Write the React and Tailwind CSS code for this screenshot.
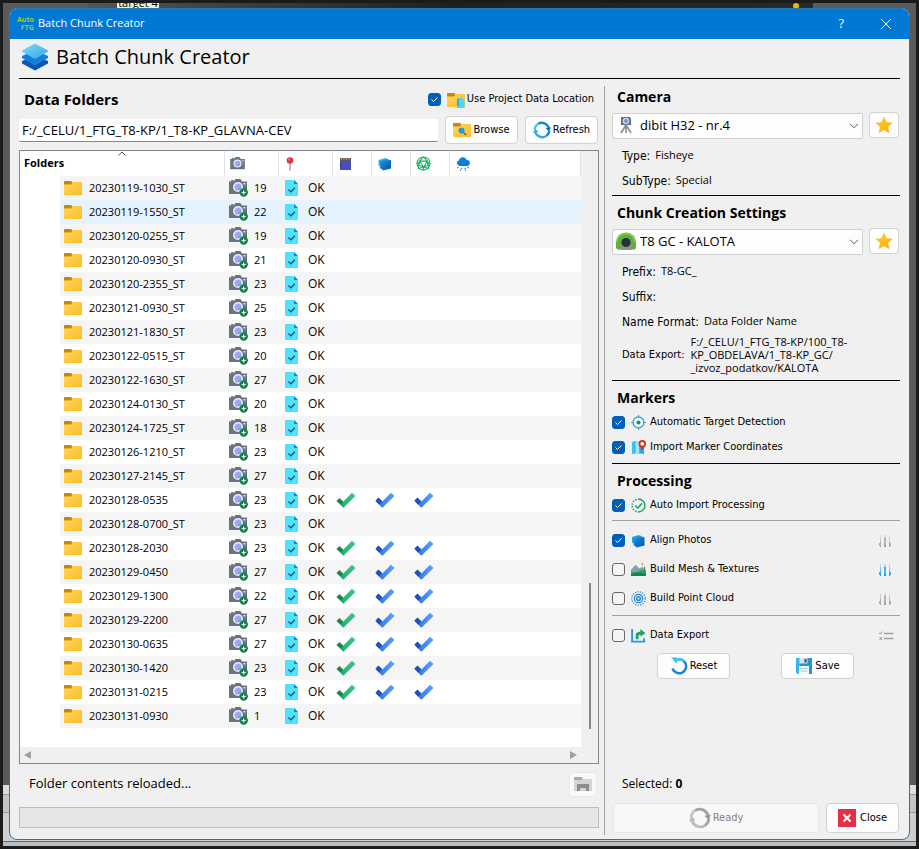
import React from "react";

const ROWS = [
  ["20230119-1030_ST", 19], ["20230119-1550_ST", 22], ["20230120-0255_ST", 19],
  ["20230120-0930_ST", 21], ["20230120-2355_ST", 23], ["20230121-0930_ST", 25],
  ["20230121-1830_ST", 23], ["20230122-0515_ST", 20], ["20230122-1630_ST", 27],
  ["20230124-0130_ST", 20], ["20230124-1725_ST", 18], ["20230126-1210_ST", 23],
  ["20230127-2145_ST", 27], ["20230128-0535", 23, true], ["20230128-0700_ST", 23],
  ["20230128-2030", 23, true], ["20230129-0450", 27, true], ["20230129-1300", 22, true],
  ["20230129-2200", 27, true], ["20230130-0635", 27, true], ["20230130-1420", 23, true],
  ["20230131-0215", 23, true], ["20230131-0930", 1],
];

const LABEL = "font-['DejaVu_Sans_Condensed','DejaVu_Sans',sans-serif]";

function Gradients() {
  return (
    <svg width="0" height="0" className="absolute" aria-hidden="true">
      <defs>
        <linearGradient id="folder" x1="0" y1="0" x2="1" y2="1"><stop offset="0" stopColor="#ffd75e" /><stop offset="1" stopColor="#fcbc24" /></linearGradient>
        <linearGradient id="lens" x1="0" y1="0" x2="1" y2="1"><stop offset="0" stopColor="#c9a6ff" /><stop offset="1" stopColor="#6fa0ee" /></linearGradient>
        <linearGradient id="layer" x1="0" y1="0" x2="1" y2="1"><stop offset="0" stopColor="#7fdcfb" /><stop offset="1" stopColor="#32a5e8" /></linearGradient>
        <linearGradient id="cube" x1="0" y1="0" x2="1" y2="1"><stop offset="0" stopColor="#1b8be0" /><stop offset="1" stopColor="#0057aa" /></linearGradient>
        <linearGradient id="green" x1="0" y1="0" x2="1" y2="0"><stop offset="0" stopColor="#21ad64" /><stop offset="1" stopColor="#44c494" /></linearGradient>
        <linearGradient id="blue" x1="0" y1="0" x2="1" y2="0"><stop offset="0" stopColor="#3079ea" /><stop offset="1" stopColor="#5ca4ff" /></linearGradient>
        <linearGradient id="star" x1="0" y1="0" x2="1" y2="1"><stop offset="0" stopColor="#ffcf33" /><stop offset="1" stopColor="#fdab05" /></linearGradient>
        <linearGradient id="fade" x1="0" y1="0" x2="0" y2="1"><stop offset="0" stopColor="#e2e2e2" /><stop offset="1" stopColor="#999" /></linearGradient>
        <linearGradient id="bluefade" x1="0" y1="0" x2="0" y2="1"><stop offset="0" stopColor="#d3e4ee" /><stop offset="1" stopColor="#199be2" /></linearGradient>
      </defs>
    </svg>
  );
}

function Icon({ w = 16, h = w, box = "0 0 16 16", children, className = "" }) {
  return <svg width={w} height={h} viewBox={box} className={`shrink-0 ${className}`} aria-hidden="true">{children}</svg>;
}

const Folder = ({ children }) => (
  <Icon w={18} h={16} box="0 0 18 16">
    <path d="M0 1.500Q0 1 .6 1H7l2 2v4H0z" fill="#c7860c" />
    <path d="M0 4.500h7L9 2h9v13H0z" fill="url(#folder)" />
    {children}
  </Icon>
);

const Camera = ({ plus }) => (
  <Icon w={plus ? 20 : 15} h={plus ? 18 : 13} box={plus ? "0 0 20 18" : "0 0 18 16"}>
    <rect x="2" y="1" width="3" height="2" fill="#5795b4" />
    <path d="M0 2.500h5L6.500 0h5L13 2.500h5V15H0z" fill="#69747d" />
    <rect x="14.500" y="4" width="2" height="1.500" fill="#d9e2e8" />
    <circle cx="9" cy="8" r="5" fill="#e9eafb" />
    <circle cx="9" cy="8" r="3.500" fill="url(#lens)" />
    {plus && <><circle cx="14.700" cy="13.500" r="4.200" fill="#128048" /><path d="M14.700 11.500v4M12.700 13.500h4" stroke="#fff" strokeWidth="1.200" /></>}
  </Icon>
);

const Doc = () => (
  <Icon w={13} h={16} box="0 0 13 16">
    <path d="M0 0h9l4 4v12H0z" fill="#50e1ff" />
    <path d="M9 0l4 4H9z" fill="#1f7fd0" />
    <path d="M3.500 9.500l2.300 2.300L10 7.700" fill="none" stroke="#0a5566" strokeWidth="1.200" />
  </Icon>
);

const Tick = ({ blue }) => (
  <Icon w={20} h={16} box="0 0 20 16">
    <path d="M.5 9L3.500 6 10 12.300 7.300 15.500z" fill={blue ? "#1c55b4" : "#16884c"} />
    <path d="M4.500 12.500L16 .8 19.500 4 7.600 15.600z" fill={blue ? "url(#blue)" : "url(#green)"} />
    {blue && <path d="M.5 8.500L3.500 5.500 7 9l-3 3.500z" fill="#1c55b4" />}
  </Icon>
);

const Photos = ({ single }) => (
  <Icon w={single ? 15 : 14} h={14} box="0 0 14 14">
    <path d="M.5 3L7 1l3 1v7H.5z" fill={single ? "#2aa5ec" : "#35c1f1"} />
    <path d="M1.500 4l7-2 3.500 1v8l-10 .5z" fill="#1b93df" />
    <path d="M3 5.500l10-2.500v8.500l-8 2-2-2z" fill="url(#cube)" />
  </Icon>
);

const Pin = () => (
  <Icon w={8} h={14} box="0 0 8 14">
    <path d="M3.300 6h1.400v7.500L4 14l-.7-.5z" fill="#9a9da1" /><circle cx="4" cy="3.500" r="3.300" fill="#e2334c" /><circle cx="3" cy="2.500" r="1" fill="#f1778a" />
  </Icon>
);

const Card = () => (
  <Icon w={12} h={14} box="0 0 12 14">
    <path d="M0 1h11v12H0z" fill="#494fb8" /><path d="M0 1h11v3H0z" fill="#60576d" /><path d="M1.500 1v2M4 1v2M6.500 1v2M9 1v2" stroke="#c39a52" /><path d="M0 6h1v4H0z" fill="#333a93" />
  </Icon>
);

const Mesh = () => (
  <Icon w={15} box="0 0 16 16">
    <g fill="none" stroke="#27ae68" strokeWidth="1.200"><circle cx="8" cy="8" r="7" /><path d="M8 1L4 5.500 1.500 9M8 1l4 4.500L14.500 9M4 5.500h8L8 12zM1.500 9L8 12l6.500-3M4 5.500L2.500 13 8 12l5.500 1L12 5.500M8 12v3" /></g>
  </Icon>
);

const Cloud = () => (
  <Icon w={14} h={14} box="0 0 14 14">
    <path d="M3.500 9A3 3 0 0 1 3 3.200 4 4 0 0 1 10.700 3 3 3 0 0 1 11 9z" fill="#127fd5" />
    <g fill="#2a8de0"><circle cx="2" cy="10.500" r=".8" /><circle cx="5.500" cy="11.500" r=".8" /><circle cx="9" cy="11.500" r=".8" /><circle cx="12" cy="10.500" r=".8" /><circle cx="4.500" cy="13.200" r=".7" /><circle cx="9.500" cy="13.200" r=".7" /></g>
  </Icon>
);

const Layers = () => (
  <Icon w={28} box="0 0 28 28">
    <path d="M1 18l13-5 13 5v2.500L14 27.500l-13-7z" fill="#0a58aa" />
    <path d="M1 13l13-6 13 6v2L14 22.500 1 15z" fill="#1480de" />
    <path d="M1 7.500L14 .5l13 7v1L14 16 1 8.500z" fill="url(#layer)" />
  </Icon>
);

const Cycle = ({ w = 18, gray }) => (
  <Icon w={w} box="0 0 20 20">
    <g fill="none" stroke={gray ? "#a3a3a3" : "#1688d3"} strokeWidth="2.600">
      <path d="M2.500 12A8 8 0 0 0 14.500 16.800" stroke={gray ? "#bcbcbc" : "#35a9e6"} />
      <path d="M17.500 8A8 8 0 0 0 5.500 3.200" />
      <path d="M14.500 16.800A8 8 0 0 0 18 10.500" />
      <path d="M5.500 3.200A8 8 0 0 0 2 9.500" stroke={gray ? "#c8c8c8" : "#45c5f2"} />
    </g>
    <path d="M0 13L2.300 8.500 6 12z" fill={gray ? "#bbb" : "#2fa8e8"} />
    <path d="M20 7L17.700 11.500 14 8z" fill={gray ? "#999" : "#0f6cbd"} />
  </Icon>
);

const ResetIcon = () => (
  <Icon w={18} box="0 0 18 18">
    <path d="M4.500 4A7 7 0 1 1 2.500 11.500" fill="none" stroke="#1688d3" strokeWidth="2.500" />
    <path d="M4.500 4A7 7 0 0 1 14 4.200" fill="none" stroke="#43c7f5" strokeWidth="2.500" />
    <path d="M1 .5h6v6z" fill="#35c1f1" />
  </Icon>
);

const Floppy = () => (
  <Icon w={18} box="0 0 18 18">
    <path d="M1 1h16v16H3l-2-2z" fill="#199bd5" /><path d="M1 1h4v16H3l-2-2z" fill="#35b8e8" />
    <rect x="4.500" y="1" width="8" height="5.500" fill="#d7e1e8" /><rect x="9.500" y="2" width="2" height="3.500" fill="#3b4a55" />
    <rect x="4" y="9" width="10" height="8" fill="#f5f9fc" /><path d="M5.500 11.500h7M5.500 14h7" stroke="#a4c6da" />
  </Icon>
);

const Star = () => <Icon w={18} box="0 0 18 18"><path d="M9 .5l2.600 5.700 6 .6-4.500 4.100 1.300 6.300L9 14l-5.400 3.200 1.300-6.300L.4 6.800l6-.6z" fill="url(#star)" /></Icon>;

const Scanner = () => (
  <Icon w={14} h={18} box="0 0 14 18">
    <path d="M7 9L2 17M7 9l5 8M7 9v8" stroke="#858b91" strokeWidth="1.600" />
    <path d="M2 1h9l1 2v6H2z" fill="#596d83" /><circle cx="7" cy="5" r="3.300" fill="#cbd9ef" /><circle cx="7" cy="5" r="2" fill="#7b93cf" />
  </Icon>
);

const Tunnel = () => (
  <Icon w={20} h={18} box="0 0 20 18">
    <path d="M0 16V10a10 9.500 0 0 1 20 0v6l-1.500 1.500H1.500z" fill="#5fae35" />
    <path d="M1 10a9 8.500 0 0 1 18 0" fill="none" stroke="#86d154" strokeWidth="1.500" />
    <path d="M4.500 18v-7a5.500 5.500 0 0 1 11 0V18z" fill="#8b9296" />
    <circle cx="10" cy="10.500" r="4.600" fill="#263238" />
  </Icon>
);

const Target = () => <Icon w={15}><circle cx="8" cy="8" r="5.800" fill="#fafdff" stroke="#3aa6e0" strokeWidth="1.500" /><path d="M8 0v3M8 13v3M0 8h3M13 8h3" stroke="#3aa6e0" strokeWidth="1.200" /><circle cx="8" cy="8" r="2.200" fill="#1c9152" /></Icon>;
const MapPin = () => <Icon w={15}><path d="M1 2l4-1 5 2v12l-4-1-5 1z" fill="#35c1f1" /><path d="M5 1l4 2v12l-4-1z" fill="#a3e4f8" /><path d="M9 7h5v8l-5-1z" fill="#2ea6e6" /><path d="M12 11L8.500 5.500h7z" fill="#c4391c" /><circle cx="12" cy="4" r="3" fill="#fff" stroke="#c4391c" strokeWidth="2" /></Icon>;
const AutoTick = () => <Icon w={15}><circle cx="8" cy="8" r="6.800" fill="none" stroke="#2aab68" strokeWidth="1.700" strokeDasharray="21.500 1.500 1.500 1.500 1.500 1.500 1.500 1.500 1.500 1.500 1.500 1.500 1.500 1.500" transform="rotate(-90 8 8)" /><path d="M4.500 8l2.800 2.800 4.500-5" fill="none" stroke="#2aab68" strokeWidth="1.800" /></Icon>;
const Terrain = () => <Icon w={15}><path d="M0 8l5-5 4 4 3-2 4 4v4H0z" fill="#89a2ad" /><path d="M0 11l8-1 3-2 5 1v6H0z" fill="#2fa565" /><path d="M0 13q5-3 16-1v3H0z" fill="#138552" /><circle cx="12" cy="2" r="1.200" fill="#fba52a" /><path d="M14.500 5v5" stroke="#118a4e" /></Icon>;
const Points = () => <Icon w={15}><g fill="none" stroke="#2387d8"><circle cx="8" cy="8" r="2" strokeWidth="1.600" /><circle cx="8" cy="8" r="4.500" strokeWidth="1.300" /><circle cx="8" cy="8" r="7.200" strokeWidth="1.200" strokeDasharray="1.400 1.300" /></g></Icon>;
const Export = () => <Icon w={15}><path d="M1.200 1v13.500H14V11" fill="none" stroke="#2397e0" strokeWidth="2" /><path d="M5 12V8q0-4 5-4V1l5.500 4.500L10 9V6.800q-2 0-2 2V12z" fill="#1fa167" /></Icon>;

const Sliders = ({ active }) => (
  <Icon w={14} h={14} box="0 0 14 14">
    <g fill={active ? "url(#bluefade)" : "url(#fade)"}><rect x="2" y="1" width="1" height="12" /><rect x="6" y="1" width="2" height="12" /><rect x="11" y="1" width="1" height="12" /></g>
    <g fill={active ? "#37aee6" : "#b0b0b0"}><rect x="1" y="9" width="2" height="3" /><rect x="6" y="4" width="2" height="3" /><rect x="11" y="9" width="2" height="3" /></g>
  </Icon>
);
const ListIcon = () => <Icon w={15} h={10} box="0 0 15 10"><path d="M5 2.500h9.500M5 7.500h9.500" stroke="#a0a0a0" strokeWidth="1.400" /><path d="M0 2l1.300 1L3.500.5M.5 6l2.500 3M3 6L.5 9" stroke="#999" fill="none" /></Icon>;

const BTN = "flex items-center justify-center rounded border border-[#d2d2d2] bg-[#fdfdfd] text-black";

function Check({ id, label, icon, on, children }) {
  return (
    <div className="flex h-[17px] items-center">
      <span className="grid shrink-0">
        <input id={id} type="checkbox" defaultChecked={on} className="peer col-start-1 row-start-1 size-[13px] appearance-none rounded-[3px] border border-[#666] bg-[#f5f5f5] checked:border-[#005fb8] checked:bg-[#005fb8]" />
        <svg viewBox="0 0 13 13" className="pointer-events-none invisible col-start-1 row-start-1 size-[13px] peer-checked:visible" aria-hidden="true"><path d="M3.500 6.500l2 2 4-4" fill="none" stroke="#fff" /></svg>
      </span>
      <label htmlFor={id} className={`flex items-center text-[11px] whitespace-nowrap ${LABEL}`}>{icon}{label}</label>
      {children}
    </div>
  );
}

function Picker({ labelledBy, value, icon }) {
  return (
    <div className="flex gap-1.5 pr-px">
      <div className="relative h-[26px] grow">
        <select aria-labelledby={labelledBy} className="h-full w-full appearance-none rounded-xs border border-[#cfcfcf] bg-[#fdfdfd] pl-[27px] text-[13px] text-black">
          <option>{value}</option>
        </select>
        <span className="pointer-events-none absolute inset-y-0 left-1 flex w-5 items-center justify-center">{icon}</span>
        <svg viewBox="0 0 10 6" className="pointer-events-none absolute top-[11px] right-1 h-[6px] w-[10px]" aria-hidden="true"><path d="M1 .8l4 4 4-4" fill="none" stroke="#555" /></svg>
      </div>
      <button type="button" aria-label="Favourite" className={`${BTN} h-[26px] w-[30px]`}><Star /></button>
    </div>
  );
}

const Heading = ({ id, children }) => <h2 id={id} className="pl-[5px] text-[14px]/[20px] font-bold">{children}</h2>;
const Field = ({ name, children }) => <div className="flex h-[25px] items-center gap-[5px] pl-2.5 text-[11px]"><dt className={`text-[12px] ${LABEL}`}>{name}:</dt><dd>{children}</dd></div>;

function Folders() {
  const th = "border-r border-[#e2e2e2] p-0 align-middle";
  return (
    <div className="flex min-h-0 grow flex-col border border-[#828790] bg-[#f0f0f0]">
      <div className="flex grow">
        <div className="relative min-w-0 grow bg-white">
          <svg viewBox="0 0 8 5" className="absolute top-0 left-[98px] h-[5px] w-2" aria-hidden="true"><path d="M.5 4.500L4 1l3.500 3.500" fill="none" stroke="#555" /></svg>
          <table className="w-full table-fixed border-separate border-spacing-0 text-[11px]">
            <colgroup><col className="w-[205px]" /><col className="w-[54px]" /><col className="w-[54px]" /><col className="w-[39px]" /><col className="w-[39px]" /><col className="w-[39px]" /><col /></colgroup>
            <thead>
              <tr className="h-[25px]">
                <th className={`${th} pl-1 text-left font-bold`}>Folders</th>
                <th aria-label="Photos" className={`${th} pl-[5px]`}><Camera /></th>
                <th aria-label="Markers" className={`${th} pl-[7px]`}><Pin /></th>
                <th aria-label="Card" className={`${th} pl-[7px]`}><Card /></th>
                <th aria-label="Aligned" className={`${th} pl-1.5`}><Photos /></th>
                <th aria-label="Mesh" className={`${th} pl-[5px]`}><Mesh /></th>
                <th aria-label="Cloud" className={`${th} pl-1.5`}><Cloud /></th>
              </tr>
            </thead>
            <tbody>
              {ROWS.map(([name, count, done], i) => {
                const bg = i === 1 ? "bg-[#e5f3ff]" : i % 2 === 0 ? "bg-[#f5f5f5]" : "bg-white";
                return (
                  <tr key={name} className="h-6">
                    <td className="p-0"><div className={`ml-10 flex h-6 items-center gap-[7px] pl-1 ${bg}`}><Folder />{name}</div></td>
                    <td className={`p-0 ${bg}`}><div className="flex items-center gap-[5px] pl-1"><Camera plus />{count}</div></td>
                    <td className={`p-0 ${bg}`}><div className="flex items-center gap-[10px] pl-1.5 text-[12px]"><Doc />OK</div></td>
                    <td className={`p-0 pl-[3px] ${bg}`}>{done && <Tick />}</td>
                    <td className={`p-0 pl-[3px] ${bg}`}>{done && <Tick blue />}</td>
                    <td className={`p-0 pl-[3px] ${bg}`}>{done && <Tick blue />}</td>
                    <td className={`p-0 ${bg}`} />
                  </tr>
                );
              })}
            </tbody>
          </table>
        </div>
        <div className="flex w-[17px] shrink-0 flex-col items-center justify-end pb-[18px]"><div className="h-[146px] w-0.5 bg-[#868686]" /></div>
      </div>
      <div className="flex h-4 items-center justify-between pr-[21px] pl-1">
        <Icon w={7} h={8} box="0 0 7 8"><path d="M7 0v8L0 4z" fill="#a0a0a0" /></Icon>
        <Icon w={7} h={8} box="0 0 7 8"><path d="M0 0v8l7-4z" fill="#a0a0a0" /></Icon>
      </div>
    </div>
  );
}

function Backdrop() {
  return (
    <div className="absolute inset-[3px] flex flex-col overflow-hidden bg-[#5b5b5b]" aria-hidden="true">
      <div className="flex h-1.5 shrink-0 justify-between overflow-hidden">
        <div className="w-[85px]" />
        <div className="flex grow items-end justify-between bg-gradient-to-r from-[#555] via-[#202020] to-[#292929] pl-[29px]">
          <span className="flex h-1.5 w-[42px] items-end justify-center overflow-hidden bg-[#f3f0cf] text-[11px]/[12px] text-black">target 4</span>
          <span className="mr-3.5 size-1.5 rounded-full bg-[#e8b90c]" />
        </div>
        <div className="w-[103px]" />
      </div>
      <div className="grow" />
      <div className="h-2.5 border-b border-[#999] bg-[#dedede]" />
      <div className="h-[18px] border-b border-[#999] bg-[#c4c4c4]" />
      <div className="h-[29px] border-b border-[#666] bg-[#cfcfcf]" />
      <div className="h-1 bg-[#bdbdbd]" />
    </div>
  );
}

export default function App() {
  return (
    <div className="relative flex min-h-screen flex-col bg-[#1b1b1b] px-[9px] pt-2 pb-[9px] font-['Open_Sans','Noto_Sans',sans-serif] text-black">
      <Gradients />
      <Backdrop />
      <main className="relative flex grow flex-col overflow-hidden rounded-lg border border-[#2477b3] bg-[#f0f0f0]">
        <header className="-mx-px -mt-px flex h-[31px] items-center bg-[#0078d4] pr-[18px] pl-2 text-white">
          <span className="grid w-4 text-[7px]/[8px] font-bold text-[#9fcf2a]" aria-hidden="true"><span>Auto</span><span className="text-right text-[#7cc95a]">FTG</span></span>
          <span className="grow pl-[5px] text-[11px]">Batch Chunk Creator</span>
          <button type="button" aria-label="Help" className="mr-9 text-[13px]">?</button>
          <button type="button" aria-label="Close window"><Icon w={12} box="0 0 12 12"><path d="M1 1l10 10M11 1L1 11" stroke="#fff" /></Icon></button>
        </header>
        <div className="flex grow flex-col px-[9px]">
          <div className="flex h-10 items-center gap-[7px] border-b border-black pb-1 pl-0.5"><Layers /><h1 className="text-[20px]">Batch Chunk Creator</h1></div>
          <div className="flex grow gap-[5px] pt-[7px]">
            <section className="flex grow flex-col pb-[11px]">
              <div className="flex h-[27px] items-center justify-between pr-[5px] pl-[5px]">
                <h2 id="data-folders" className="text-[15px] font-bold">Data Folders</h2>
                <Check id="project" on label="Use Project Data Location" icon={<span className="mr-0.5 ml-1.5"><Folder><path d="M10 6h5l2.500 2.500V16H10z" fill="#4ed6f7" /><path d="M11 7v7" stroke="#1d87bf" /></Folder></span>} />
              </div>
              <div className="mt-[3px] mb-1.5 flex items-center gap-[7px] pr-px">
                <input aria-labelledby="data-folders" defaultValue="F:/_CELU/1_FTG_T8-KP/1_T8-KP_GLAVNA-CEV" className="h-[23px] min-w-0 grow rounded-xs border-b border-[#868686] bg-white px-[3px] text-[13px]" />
                <button type="button" className={`${BTN} h-7 w-[73px] gap-0.5 text-[11px] ${LABEL}`}><Folder><circle cx="8.500" cy="8.500" r="3" fill="#2b95dc" /><path d="M10.500 10.500l2.500 2.500" stroke="#1673bd" strokeWidth="1.500" /></Folder>Browse</button>
                <button type="button" className={`${BTN} h-7 w-[73px] gap-0.5 text-[11px] ${LABEL}`}><Cycle />Refresh</button>
              </div>
              <Folders />
              <div className="flex h-10 items-center justify-between pr-0.5 pl-2.5 text-[13px]">
                <p>Folder contents reloaded...</p>
                <button type="button" disabled aria-label="Open export folder" className="flex h-[25px] w-7 items-center justify-center rounded border border-[#e8e8e8] bg-[#f9f9f9]"><Icon w={18} h={16} box="0 0 18 16"><path d="M0 1h8l1 2v2H0z" fill="#aaa" /><path d="M0 4h7l2-1h9v12H0z" fill="#d4d4d4" /><path d="M3 8h12v7h-3v-3H6v3H3z" fill="#8e8e8e" /></Icon></button>
              </div>
              <div role="progressbar" aria-valuenow={0} aria-label="Progress" className="mt-[3px] h-[21px] border border-[#bcbcbc] bg-[#e6e6e6]" />
            </section>
            <section className="mb-1 flex w-[296px] shrink-0 flex-col border-l border-[#a0a0a0] pl-[7px]">
              <div className="border-b border-black pt-px pb-[2px]">
                <div className="pb-[5px]"><Heading id="camera">Camera</Heading></div>
                <Picker labelledBy="camera" value="dibit H32 - nr.4" icon={<Scanner />} />
                <dl className="pt-[5px]"><Field name="Type">Fisheye</Field><Field name="SubType">Special</Field></dl>
              </div>
              <div className="border-b border-black pt-[7px] pb-[5px]">
                <div className="pb-[5px]"><Heading id="chunk">Chunk Creation Settings</Heading></div>
                <Picker labelledBy="chunk" value="T8 GC - KALOTA" icon={<Tunnel />} />
                <dl className="pt-[5px]">
                  <Field name="Prefix">T8-GC_</Field><Field name="Suffix" /><Field name="Name Format">Data Folder Name</Field>
                  <div className="flex h-[41px] items-center gap-1.5 pl-2.5 text-[11px]/[13px]"><dt className={LABEL}>Data Export:</dt><dd>F:/_CELU/1_FTG_T8-KP/100_T8-<br />KP_OBDELAVA/1_T8-KP_GC/<br />_izvoz_podatkov/KALOTA</dd></div>
                </dl>
              </div>
              <div className="flex flex-col gap-2 border-b border-black pt-[7px] pb-[7px]">
                <div className="-mb-[2px]"><Heading>Markers</Heading></div>
                <Check id="detect" on label="Automatic Target Detection" icon={<span className="mr-1 ml-1.5"><Target /></span>} />
                <Check id="coords" on label="Import Marker Coordinates" icon={<span className="mr-1 ml-1.5"><MapPin /></span>} />
              </div>
              <div className="flex flex-col gap-1.5 border-b border-[#a0a0a0] pt-[7px] pb-[6px]">
                <Heading>Processing</Heading>
                <Check id="auto" on label="Auto Import Processing" icon={<span className="mr-1 ml-1.5"><AutoTick /></span>} />
              </div>
              <div className="flex flex-col gap-3 border-b border-[#a0a0a0] pt-[11px] pr-2 pb-2">
                <Check id="align" on label="Align Photos" icon={<span className="mr-1 ml-1.5"><Photos single /></span>}><button type="button" aria-label="Align options" className="ml-auto"><Sliders /></button></Check>
                <Check id="mesh" label="Build Mesh & Textures" icon={<span className="mr-1 ml-1.5"><Terrain /></span>}><button type="button" aria-label="Mesh options" className="ml-auto"><Sliders active /></button></Check>
                <Check id="cloud" label="Build Point Cloud" icon={<span className="mr-1 ml-1.5"><Points /></span>}><button type="button" aria-label="Point cloud options" className="ml-auto"><Sliders /></button></Check>
              </div>
              <div className="pt-[11px] pr-1.5"><Check id="export" label="Data Export" icon={<span className="mr-1 ml-1.5"><Export /></span>}><button type="button" aria-label="Export options" className="ml-auto"><ListIcon /></button></Check></div>
              <div className="flex justify-between pt-[9px] pr-[46px] pl-[45px]">
                <button type="button" className={`${BTN} h-[26px] w-[73px] gap-0.5 text-[11px] ${LABEL}`}><ResetIcon />Reset</button>
                <button type="button" className={`${BTN} h-[26px] w-[73px] gap-0.5 text-[11px] ${LABEL}`}><Floppy />Save</button>
              </div>
              <p className="mt-auto pb-[9px] pl-2.5 text-[12px]/[20px]">Selected: <b>0</b></p>
              <div className="flex gap-[7px] pr-px pb-0.5 pl-px">
                <button type="button" disabled className={`flex h-[30px] grow items-center justify-center gap-0.5 rounded border border-[#e5e5e5] bg-[#f8f8f8] text-[11px] text-[#838383] ${LABEL}`}><Cycle w={22} gray />Ready</button>
                <button type="button" className={`${BTN} h-[30px] w-[73px] gap-1 text-[11px] ${LABEL}`}><Icon w={18} box="0 0 18 18"><rect width="18" height="18" fill="#e62f46" /><path d="M5.500 5.500l7 7M12.500 5.500l-7 7" stroke="#fff" strokeWidth="2" /></Icon>Close</button>
              </div>
            </section>
          </div>
        </div>
      </main>
    </div>
  );
}
